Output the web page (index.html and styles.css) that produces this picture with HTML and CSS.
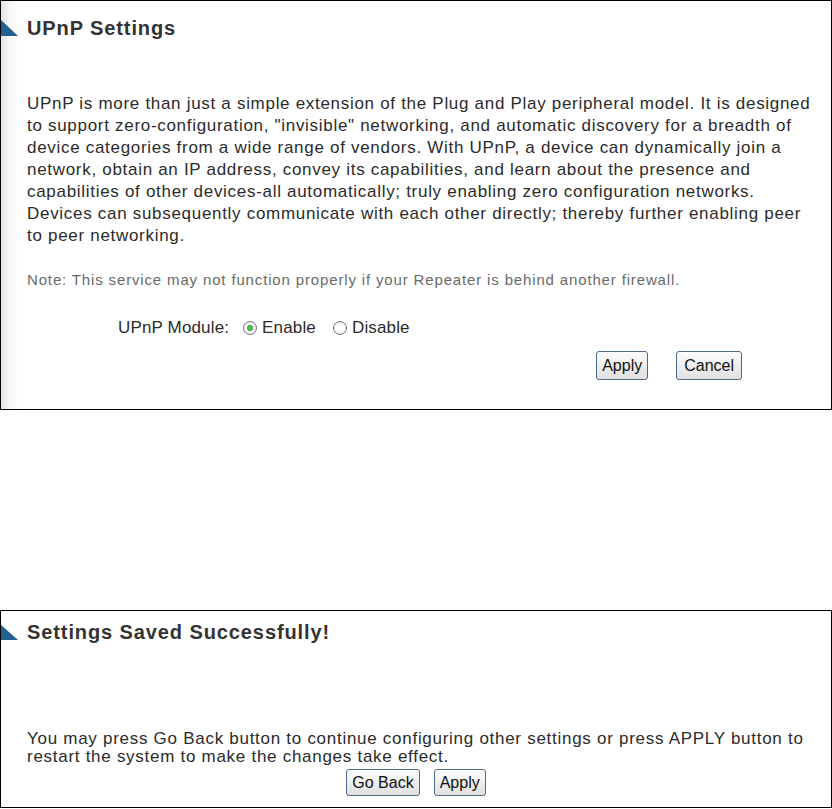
FILE: index.html
```html
<!DOCTYPE html>
<html lang="en">
<head>
    <meta charset="UTF-8">
    <title>UPnP Settings</title>
    <link rel="stylesheet" href="styles.css">
</head>
<body>
    <div class="panel upnp">
        <div class="head">
            <svg class="mark" width="17" height="16" viewBox="0 0 17 16"><polygon points="0,0 17,16 0,16" fill="#20618f"/></svg>
            <h1>UPnP Settings</h1>
        </div>
        <p class="intro">UPnP is more than just a simple extension of the Plug and Play peripheral model. It is designed to support zero-configuration, "invisible" networking, and automatic discovery for a breadth of device categories from a wide range of vendors. With UPnP, a device can dynamically join a network, obtain an IP address, convey its capabilities, and learn about the presence and capabilities of other devices-all automatically; truly enabling zero configuration networks. Devices can subsequently communicate with each other directly; thereby further enabling peer to peer networking.</p>
        <p class="note">Note: This service may not function properly if your Repeater is behind another firewall.</p>
        <div class="module">
            <span class="label">UPnP Module:</span>
            <label class="opt"><input type="radio" name="upnp" checked> Enable</label>
            <label class="opt"><input type="radio" name="upnp"> Disable</label>
        </div>
        <div class="actions">
            <button class="btn">Apply</button>
            <button class="btn wide">Cancel</button>
        </div>
    </div>

    <div class="panel saved">
        <div class="head">
            <svg class="mark" width="17" height="15" viewBox="0 0 17 15"><polygon points="0,0 17,15 0,15" fill="#20618f"/></svg>
            <h1>Settings Saved Successfully!</h1>
        </div>
        <p class="msg">You may press Go Back button to continue configuring other settings or press APPLY button to restart the system to make the changes take effect.</p>
        <div class="actions center">
            <button class="btn small">Go Back</button>
            <button class="btn small">Apply</button>
        </div>
    </div>
</body>
</html>
```

FILE: styles.css
```css
body { margin: 0; background: #fff; font-family: "Liberation Sans", Arial, sans-serif; color: #2b2b2b; }
.panel { box-sizing: border-box; border: 1px solid #000; padding: 0 13px 0 26px; }
.upnp { height: 410px; background: linear-gradient(to right, #e2e2e2, #f6f6f6 8px, #fff 18px); }
.saved { height: 198px; margin-top: 200px; }
.head { display: flex; align-items: center; gap: 9px; height: 24px; margin: 15px 0 0 -26px; }
.saved .head { margin-top: 9px; }
.mark { display: block; }
h1 { margin: 0; font-size: 20px; line-height: 24px; letter-spacing: 0.9px; color: #333; }
.intro { margin: 53px 0 0; font-size: 17px; line-height: 22px; letter-spacing: 0.7px; }
.note { margin: 23px 0 0; font-size: 15px; line-height: 20px; letter-spacing: 0.85px; color: #6a6a6a; }
.module { display: flex; align-items: center; margin: 27px 0 0 91px; font-size: 17px; line-height: 22px; letter-spacing: 0.15px; }
.label { margin-right: 14px; }
.opt { display: flex; align-items: center; gap: 5px; margin-right: 17px; }
.opt input { appearance: none; margin: 0; width: 14px; height: 14px; border: 1px solid #6f7780; border-radius: 50%; background: radial-gradient(circle, #fff 40%, #d9dde2); box-sizing: border-box; }
.opt input:checked { background: radial-gradient(circle, #6ad86a 0, #2f9f2f 2.5px, #fff 3.5px, #fff 40%, #d9dde2); }
.actions { display: flex; justify-content: flex-end; gap: 28px; margin: 12px 76px 0 0; }
.actions.center { justify-content: center; gap: 14px; margin: 3px -13px 0 -26px; }
.msg { margin: 86px 0 0; font-size: 17px; line-height: 18px; letter-spacing: 0.72px; }
.btn { height: 29px; padding: 0 5px; font-family: "Liberation Sans", Arial, sans-serif; font-size: 16px; color: #111; background: linear-gradient(#fdfdfd, #ececec 55%, #e0e0e0); border: 1px solid #4d6a88; border-radius: 3px; }
.btn.wide { padding: 0 7px; }
.btn.small { height: 27px; }
```
